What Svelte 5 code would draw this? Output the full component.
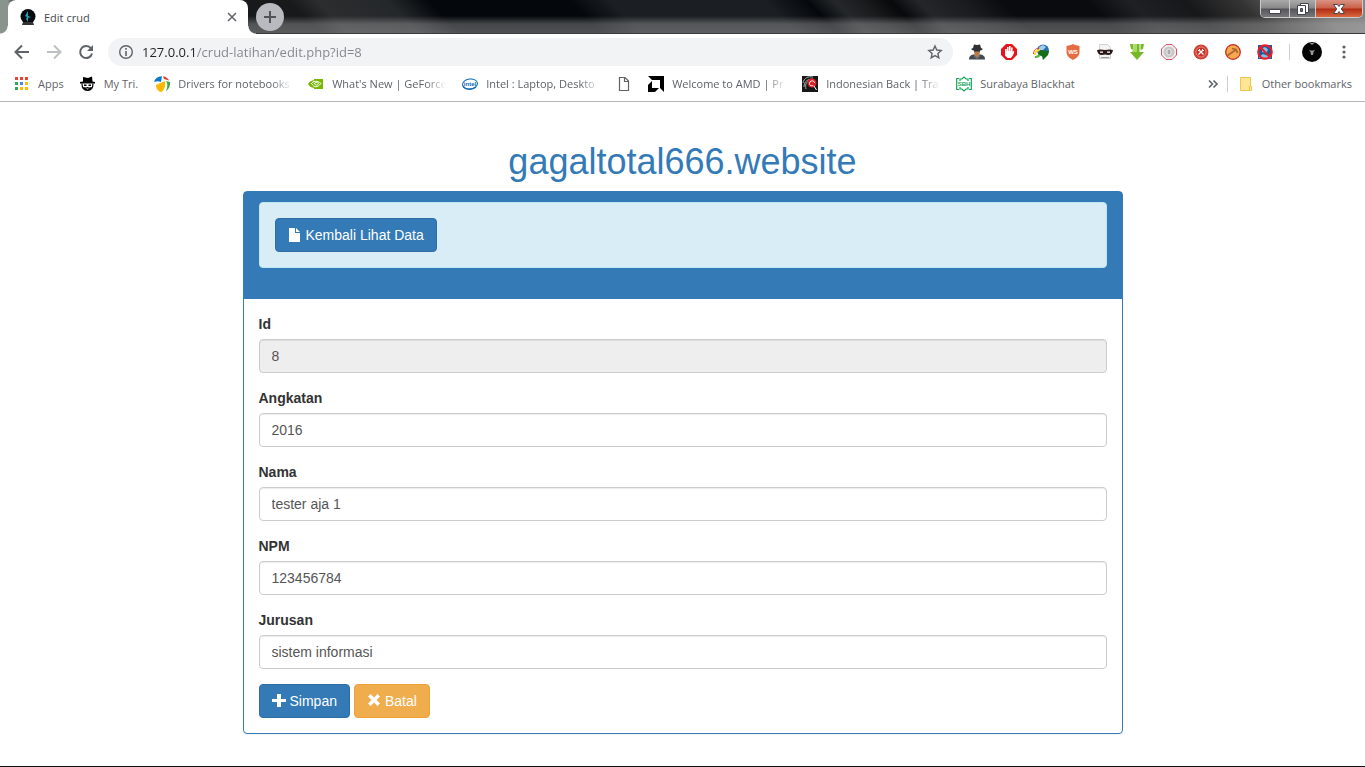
<script>
	const bookmarks = [
		{ title: 'Apps', icon: apps },
		{ title: 'My Tri.', icon: hat },
		{ title: 'Drivers for notebooks', icon: drivers, faded: true },
		{ title: "What's New | GeForce", icon: nvidia, faded: true },
		{ title: 'Intel : Laptop, Deskto', icon: intel, faded: true },
		{ title: '', icon: page },
		{ title: 'Welcome to AMD | Pr', icon: amd, faded: true },
		{ title: 'Indonesian Back | Tra', icon: backtrack, faded: true },
		{ title: 'Surabaya Blackhat', icon: blackhat }
	];

	const extensions = [
		{ name: 'Spy', icon: spy },
		{ name: 'Ad block', icon: hand },
		{ name: 'Download manager', icon: globe },
		{ name: 'WS', icon: shield },
		{ name: 'Private page', icon: mask },
		{ name: 'Downloader', icon: arrowDown },
		{ name: 'Octagon', icon: octagon },
		{ name: 'Tools', icon: tools },
		{ name: 'Hammer', icon: hammer },
		{ name: 'Blocker', icon: blocker }
	];

	let url = $state('127.0.0.1/crud-latihan/edit.php?id=8');

	let fields = $state([
		{ id: 'id', label: 'Id', value: '8', readonly: true },
		{ id: 'angkatan', label: 'Angkatan', value: '2016' },
		{ id: 'nama', label: 'Nama', value: 'tester aja 1' },
		{ id: 'npm', label: 'NPM', value: '123456784' },
		{ id: 'jurusan', label: 'Jurusan', value: 'sistem informasi' }
	]);
</script>

<!-- bookmark icons -->
{#snippet apps()}
	<svg viewBox="0 0 16 16">
		<path fill="#ea4335" d="M1 1h3v3H1zM6 1h3v3H6zM11 1h3v3h-3z" />
		<path fill="#34a853" d="M1 6h3v3H1zM1 11h3v3H1z" />
		<path fill="#4285f4" d="M6 6h3v3H6z" />
		<path fill="#fbbc05" d="M11 6h3v3h-3zM6 11h3v3H6zM11 11h3v3h-3z" />
	</svg>
{/snippet}
{#snippet hat()}
	<svg viewBox="0 0 16 16">
		<path d="M3 1l5 1 4-1.500.5 5L15 6v1.500H0V6l3-.5z" />
		<path fill="none" stroke="#000" stroke-width="1.200" d="M2 7.500C2 12 4 14.500 7.500 14.500S13 12 13 7.500" />
		<path d="M4 8.500h2.500V10H4zM8.500 8.500H11V10H8.500zM3 11l3 .5 1.500-.5 1.500.5 3-.5c-.5 2.500-2 3.500-4.500 3.500S3.500 13.500 3 11z" />
		<path fill="#fff" d="M6 12.500h3l-1.500 1z" />
	</svg>
{/snippet}
{#snippet drivers()}
	<svg viewBox="0 0 16 16">
		<path fill="#0878c9" d="M0 6C1 2.500 4 .5 8 .3L7 6c-2-1-4-1-7 0z" />
		<path fill="#e23b35" d="M9 .2c3 .3 5 2 6 4.300L10 3z" />
		<path fill="#38a94e" d="M12 5l4 1c.4 4-1 7-4 9 1.500-4 2-7 0-10z" />
		<path fill="#fbb900" d="M2 9l9-4c1 5-1 10-4 11C4 15.500 2 13 2 9z" />
	</svg>
{/snippet}
{#snippet nvidia()}
	<svg viewBox="0 0 16 16">
		<path fill="#76b900" d="M6 3h9v10H6zM0 8c2-3 4-4 7-4v8C4 12 2 11 0 8z" />
		<path fill="none" stroke="#fff" d="M3 8c2-3 6-4 10-.5C9 12 6 11.500 4 8M6 8c1-2 3-2 4.500-.5C9 10 7 9.500 7 8M6 5v1" />
	</svg>
{/snippet}
{#snippet intel()}
	<svg viewBox="0 0 16 16">
		<ellipse cx="8" cy="8" rx="7.500" ry="5" fill="#fff" stroke="#0f6ab4" transform="rotate(-7 8 8)" />
		<path fill="none" stroke="#0f6ab4" stroke-width="1.500" d="M1 10c2 4 9 4 13 1" />
		<text x="8" y="10" class="logo-text" font-size="6" fill="#0f6ab4">intel</text>
	</svg>
{/snippet}
{#snippet page()}
	<svg viewBox="0 0 16 16">
		<path fill="#fff" stroke="#5f6368" stroke-width="1.200" d="M3.500 1.500h5.500l3.500 3.500v9.500h-9zM8.500 1.500V5.500h4" />
	</svg>
{/snippet}
{#snippet amd()}
	<svg viewBox="0 0 16 16">
		<path d="M0 0h16v16l-4-4V4H4z" />
		<path d="M4 5v7h7l-4 4H0V9z" />
	</svg>
{/snippet}
{#snippet backtrack()}
	<svg viewBox="0 0 16 16">
		<path fill="#171717" d="M0 0h16v16H0z" />
		<path fill="none" stroke="#aaa" d="M1 7c1-5 5-7 10-6M2 11C2 5 6 3 11 3M4 13C3 9 4 6 7 5" />
		<circle cx="10" cy="7" r="4.500" fill="#e21c22" />
		<path fill="none" stroke="#fff" d="M12.500 7c0-3-5-3-5 .5 0 2.500 3 3 4 1.500M12 10l2.500 4" />
	</svg>
{/snippet}
{#snippet blackhat()}
	<svg viewBox="0 0 16 16" fill="none" stroke="#12a558" stroke-width="1.200">
		<path d="M3 2.500H.7v11H3M13 2.500h2.300v11H13" />
		<path d="M4 5V3h2l2-2 2 2h2v2M4 11v2h2l2 2 2-2h2v-2" />
		<text x="8" y="10" class="logo-text" font-size="6" stroke="none" fill="#12a558">SBH</text>
	</svg>
{/snippet}

<!-- extension icons -->
{#snippet spy()}
	<svg viewBox="0 0 16 16">
		<path fill="#45494e" d="M0 15.500c0-3.500 2-4.500 4-5h8c2 .5 4 1.500 4 5z" />
		<path fill="#b87a44" d="M5 5h6v3l-1 4-2 2-2-2-1-4z" />
		<path fill="#2f3134" d="M5 .5l3 .5 3-.5 1 3.500 2 1-2 1.500H4L2 5l2-1zM5 6h6v1.500H5z" />
		<path fill="#6a7078" d="M5 10.500l3 3 3-3v2l-3 3-3-3z" />
	</svg>
{/snippet}
{#snippet hand()}
	<svg viewBox="0 0 16 16">
		<path fill="#e8141c" d="M5 0h6l5 5v6l-5 5H5l-5-5V5z" />
		<path fill="#fff" d="M4 5h1.700v2H6V3h1.600v4H8V2h1.600v5h.4V3.500h1.600V8l1-1 .8.800-1.500 3.700L10 14H6.500L4 11.500z" />
	</svg>
{/snippet}
{#snippet globe()}
	<svg viewBox="0 0 16 16">
		<circle cx="10" cy="6.500" r="6" fill="#2d6fae" />
		<path fill="#9fd0ee" d="M6 3l4-2 3 2-3 3-4 1z" />
		<path fill="none" stroke="#e43b27" d="M.5 10c0-4 3-6 6-6" />
		<path fill="none" stroke="#ffda2b" stroke-width="2" d="M2 11c0-3 2-5 5-5" />
		<path fill="none" stroke="#52b837" stroke-width="2" d="M2 13c2 .5 4-1 6-3" />
		<path fill="#176e18" d="M7 6l9 1-1 4-5 5-1-4-4-2z" />
	</svg>
{/snippet}
{#snippet shield()}
	<svg viewBox="0 0 16 16">
		<path fill="#e66d42" d="M8 0c2 1 4 1.500 6.500 2v6c0 4-3 6-6.500 8-3.500-2-6.500-4-6.500-8V2C4 1.500 6 1 8 0z" />
		<text x="8" y="10" class="logo-text" font-size="6" fill="#fff">WS</text>
	</svg>
{/snippet}
{#snippet mask()}
	<svg viewBox="0 0 16 16">
		<path fill="#f4f4f4" stroke="#d0d0d0" d="M2.500.5h8l3 3v11h-11z" />
		<path fill="#2a171a" d="M0 6c3-1 5-.5 8 0 3-.5 5-1 8 0-.5 4-3 6-8 4.500C3 12 .5 10 0 6z" />
		<path fill="#fff" d="M3 7.500h3v1.200H3zM10 7.500h3v1.200h-3z" />
		<path fill="#999" d="M4 13h8v1H4z" />
	</svg>
{/snippet}
{#snippet arrowDown()}
	<svg viewBox="0 0 16 16">
		<path fill="#77b82a" d="M5.500 0h5v8H15l-7 8-7-8h4.500zM1 0h3.500v6L2 5zM11.500 0H15l-1 5-2.500 1z" />
		<path fill="#a8db5d" d="M6 0h2v8H3z" />
	</svg>
{/snippet}
{#snippet octagon()}
	<svg viewBox="0 0 16 16">
		<path fill="#eee" stroke="#e14d68" d="M5 .5h6L15.500 5v6L11 15.500H5L.5 11V5z" />
		<circle cx="8" cy="8" r="5.500" fill="#c7c7c7" />
		<rect x="6" y="5" width="4" height="6" rx="2" fill="#aaa" stroke="#eee" />
	</svg>
{/snippet}
{#snippet tools()}
	<svg viewBox="0 0 16 16">
		<circle cx="8" cy="8" r="7.500" fill="#cf4437" />
		<circle cx="8" cy="8" r="5" fill="#c63429" stroke="#e99b93" stroke-width=".8" />
		<path stroke="#fff" stroke-width="1.200" d="M6 6l4.500 4.500M10 6l-4.500 4.500" />
		<path stroke="#fff" d="M5 7l2-2M9 5l2 2" />
	</svg>
{/snippet}
{#snippet hammer()}
	<svg viewBox="0 0 16 16">
		<circle cx="8" cy="8" r="7.300" fill="#f9a852" stroke="#c8301c" stroke-width="1.300" />
		<path fill="none" stroke="#a8682f" stroke-width="1.800" d="M2.500 11.500l8-5.500M7 4.500l4 1 1.500 3.500" />
	</svg>
{/snippet}
{#snippet blocker()}
	<svg viewBox="0 0 16 16">
		<path fill="#1c5c98" d="M1 1h14v14H1z" />
		<path fill="#7fc0e8" d="M5 5c2-3 5-2 6 1l-2 3-4-1zM2 13l4-3 8 3v1H2z" />
		<circle cx="8" cy="8" r="6.800" fill="none" stroke="#ed1c24" stroke-width="2" />
		<path stroke="#ed1c24" stroke-width="2" d="M3 3l10 10" />
	</svg>
{/snippet}

<div class="window">
	<header>
		<div class="tabstrip">
			<div class="tab">
				<svg class="favicon" viewBox="0 0 16 16">
					<circle cx="8" cy="7.500" r="7.500" fill="#080c10" />
					<path fill="#333" d="M3 13h10l1 3H2z" />
					<path fill="#1fa3b5" d="M8 2L5 7l2 1-1 2 2 3V9l3-1-3-1z" />
				</svg>
				<span>Edit crud</span>
				<button class="close-tab" aria-label="Close tab">
					<svg viewBox="0 0 16 16"><path stroke="#5f6368" stroke-width="1.500" d="M4 4l8 8M12 4l-8 8" /></svg>
				</button>
			</div>
			<button class="new-tab" aria-label="New tab">
				<svg viewBox="0 0 16 16"><path stroke="#505358" stroke-width="2" d="M8 2v12M2 8h12" /></svg>
			</button>
			<div class="window-controls">
				<button aria-label="Minimize">
					<svg viewBox="0 0 16 16"><path fill="#fff" stroke="#45454f" d="M2.500 8.500h11v4h-11z" /></svg>
				</button>
				<button class="restore" aria-label="Restore">
					<svg viewBox="0 0 16 16">
						<path fill="#fff" stroke="#45454f" d="M5.500 2.500h8v9h-8z" />
						<path fill="#fff" stroke="#45454f" d="M2.500 4.500h8v9h-8z" />
						<path fill="#777" stroke="#45454f" d="M5.500 7.500h2v3h-2z" />
					</svg>
				</button>
				<button class="close" aria-label="Close">
					<svg viewBox="0 0 16 16">
						<path fill="#fff" stroke="#45454f" d="M2.500 3.500h4L8 5.500l1.500-2h4L10.300 8l3.200 4.500h-4L8 10.500l-1.500 2h-4L5.700 8z" />
					</svg>
				</button>
			</div>
		</div>

		<div class="toolbar">
			<button class="icon" aria-label="Back">
				<svg viewBox="0 0 16 16"><path fill="none" stroke="#5f6368" stroke-width="2" d="M15 8H2M8 1.500L1.500 8 8 14.500" /></svg>
			</button>
			<button class="icon" aria-label="Forward" disabled>
				<svg viewBox="0 0 16 16"><path fill="none" stroke="#bdc1c6" stroke-width="2" d="M1 8h13M8 1.500L14.500 8 8 14.500" /></svg>
			</button>
			<button class="icon" aria-label="Reload">
				<svg viewBox="0 0 16 16">
					<path fill="none" stroke="#5f6368" stroke-width="2" d="M13 4.500A6 6 0 1 0 14 9.500" />
					<path fill="#5f6368" d="M15 1v6H9z" />
				</svg>
			</button>
			<div class="omnibox">
				<svg viewBox="0 0 16 16">
					<circle cx="8" cy="8" r="6.300" fill="none" stroke="#5f6368" stroke-width="1.400" />
					<path fill="#5f6368" d="M7.200 4h1.600v1.700H7.200zM7.200 7h1.600v5H7.200z" />
				</svg>
				<input class="url" aria-label="Address" bind:value={url} />
				<button class="icon" aria-label="Bookmark this page">
					<svg viewBox="0 0 16 16">
						<path fill="none" stroke="#5f6368" stroke-width="1.400" d="M8 2l1.800 4 4.400.5-3.300 3 .9 4.300L8 11.600l-3.800 2.200.9-4.300-3.300-3L6.200 6z" />
					</svg>
				</button>
			</div>
			<div class="extensions">
				{#each extensions as ext}
					<button class="icon" aria-label={ext.name}>{@render ext.icon()}</button>
				{/each}
			</div>
			<button class="avatar" aria-label="Profile">
				<svg viewBox="0 0 20 20">
					<circle cx="10" cy="10" r="10" fill="#050505" />
					<path fill="#999" d="M7 8l2 .5h2l2-.5-1.500 2-.5 3H9l-.5-3zM8 1h4l-1 1.500H9z" />
				</svg>
			</button>
			<button class="icon" aria-label="Menu">
				<svg viewBox="0 0 16 16" fill="#5f6368">
					<circle cx="8" cy="3" r="1.600" /><circle cx="8" cy="8" r="1.600" /><circle cx="8" cy="13" r="1.600" />
				</svg>
			</button>
		</div>

		<nav class="bookmarks">
			{#each bookmarks as bookmark}
				<a href="#bookmark" aria-label={bookmark.title || 'Page'}>
					{@render bookmark.icon()}
					{#if bookmark.title}
						<span class:faded={bookmark.faded}>{bookmark.title}</span>
					{/if}
				</a>
			{/each}
			<button class="more" aria-label="More bookmarks">
				<svg viewBox="0 0 16 16"><path fill="none" stroke="#5f6368" stroke-width="1.600" d="M4 4.500L7.500 8 4 11.500M8.500 4.500L12 8l-3.500 3.500" /></svg>
			</button>
			<a class="other" href="#other">
				<svg viewBox="0 0 16 16">
					<path fill="#ffe694" stroke="#ebc74f" d="M2.500 1.500h10v9h1v4h-11z" />
					<path fill="none" stroke="#ebc74f" d="M11.500 14v-3.500h1" />
				</svg>
				Other bookmarks
			</a>
		</nav>
	</header>

	<main>
		<h1>gagaltotal666.website</h1>
		<section class="panel">
			<div class="panel-heading">
				<div class="alert">
					<a class="btn primary" href="#data">
						<svg viewBox="0 0 14 14"><path fill="#fff" d="M1 0h6v5h5v9H1zM8 0l4 4H8z" /></svg>
						Kembali Lihat Data
					</a>
				</div>
			</div>
			<form class="panel-body">
				{#each fields as field}
					<div class="form-group">
						<label for={field.id}>{field.label}</label>
						<input id={field.id} type="text" bind:value={field.value} readonly={field.readonly} />
					</div>
				{/each}
				<div class="actions">
					<button type="button" class="btn primary">
						<svg viewBox="0 0 14 14"><path fill="#fff" d="M5 0h4v5h5v3H9v5H5V8H0V5h5z" /></svg>
						Simpan
					</button>
					<button type="reset" class="btn warning">
						<svg viewBox="0 0 14 14"><path fill="#fff" d="M3.500 0L7 3.500 10.500 0 13 2.500 9.500 6 13 9.500 10.500 12 7 8.500 3.500 12 1 9.500 4.500 6 1 2.500z" /></svg>
						Batal
					</button>
				</div>
			</form>
		</section>
	</main>
</div>

<style>
	:global(body) {
		margin: 0;
		background: #fff;
	}

	.window {
		box-sizing: border-box;
		min-height: 100vh;
		border-bottom: 1px solid #111;
		font-family: "Open Sans", "Noto Sans", sans-serif;
		font-size: 11px;
		color: #5f6368;
	}

	header button {
		padding: 0;
		border: none;
		background: none;
	}

	svg {
		display: block;
		flex: none;
		width: 16px;
		height: 16px;
	}

	.logo-text {
		font-family: "Liberation Sans", Arial, sans-serif;
		font-weight: bold;
		text-anchor: middle;
	}

	/*------ TAB STRIP ---*/
	.tabstrip {
		display: flex;
		height: 34px;
		padding-left: 8px;
		background:
			linear-gradient(to right, #8a948e 0, #8a948e 8px, transparent 16px),
			linear-gradient(to bottom, transparent 16px, rgba(190, 190, 190, 0.35) 24px, rgba(190, 190, 190, 0.4) 33px, #3b3b3b 33px),
			linear-gradient(45deg, #1a1c1e 0%, #17191b 23%, #2b2d2e 25%, #25282b 30%, #04080c 33%, #04080c 43%, #1b1f23 46%,
				#1b1f23 57%, #05080c 60%, #24272a 62%, #1a1b1d 64%, #08090b 66%, #242629 68%, #1b1c1f 71%, #0a0b0e 74%, #0a0b0e 80%,
				#1f2023 83%, #17181a 87%, #343434 91%, #777 96%, #888 100%);
	}

	.tab {
		position: relative;
		display: flex;
		align-items: center;
		gap: 8px;
		box-sizing: border-box;
		width: 240px;
		padding: 0 8px 0 12px;
		border-radius: 8px 8px 0 0;
		background: #fff;
		color: #45494d;
	}

	/* outward curves at the foot of the tab */
	.tab::before,
	.tab::after {
		content: "";
		position: absolute;
		bottom: 0;
		width: 8px;
		height: 8px;
	}

	.tab::before {
		right: 100%;
		background: radial-gradient(circle at 0 0, transparent 7px, #fff 8px);
	}

	.tab::after {
		left: 100%;
		background: radial-gradient(circle at 100% 0, transparent 7px, #fff 8px);
	}

	.close-tab {
		margin-left: auto;
	}

	.new-tab {
		display: flex;
		align-items: center;
		justify-content: center;
		align-self: center;
		width: 28px;
		height: 28px;
		margin-left: 8px;
	}

	header .new-tab {
		border-radius: 50%;
		background: #b9babf;
	}

	.window-controls {
		display: flex;
		align-self: flex-start;
		margin: 0 2px 0 auto;
		border: 1px solid #ccc;
		border-top: none;
		border-radius: 0 0 5px 5px;
		overflow: hidden;
	}

	.window-controls button {
		display: flex;
		align-items: center;
		justify-content: center;
		width: 29px;
		height: 17px;
		border-right: 1px solid #ccc;
		background: linear-gradient(#aaa 0, #888 8px, #55555a 9px, #77777c 17px);
	}

	.window-controls .restore {
		width: 26px;
	}

	.window-controls .close {
		width: 46px;
		border-right: none;
		background: linear-gradient(#d99384 0, #cb604a 8px, #b12b12 9px, #d9683f 17px);
	}

	/*------ TOOLBAR ---*/
	.toolbar {
		display: flex;
		align-items: center;
		gap: 16px;
		height: 36px;
		padding: 0 13px 0 14px;
	}

	.omnibox {
		display: flex;
		flex: 1;
		align-items: center;
		gap: 8px;
		height: 28px;
		margin-left: -2px;
		padding: 0 10px;
		border-radius: 14px;
		background: #f1f3f4;
	}

	/* host name dark, path grey */
	.url {
		flex: 1;
		min-width: 0;
		padding: 0;
		border: none;
		outline: none;
		background: linear-gradient(to right, #202124 55px, #80868b 55px);
		background-clip: text;
		-webkit-text-fill-color: transparent;
		font: 13px/20px "Open Sans", "Noto Sans", sans-serif;
	}

	.extensions {
		display: flex;
		gap: 16px;
		padding-right: 16px;
		border-right: 1px solid #ccced1;
	}

	.avatar {
		margin: 0 -2px 0 -4px;
	}

	.avatar svg {
		width: 20px;
		height: 20px;
	}

	/*------ BOOKMARKS ---*/
	.bookmarks {
		display: flex;
		align-items: center;
		gap: 16px;
		height: 28px;
		padding: 0 13px 3px 14px;
		border-bottom: 1px solid #b4b6b8;
		line-height: 16px;
		white-space: nowrap;
	}

	.bookmarks a {
		display: flex;
		align-items: center;
		gap: 8px;
		color: #5f6368;
		text-decoration: none;
	}

	.bookmarks .faded {
		width: 114px;
		mask-image: linear-gradient(to right, #000 94px, transparent 114px);
	}

	.bookmarks .more {
		margin-left: auto;
	}

	.bookmarks .other {
		margin-left: -10px;
		padding-left: 10px;
		border-left: 1px solid #ccced1;
	}

	/*------ PAGE ---*/
	main {
		max-width: 880px;
		margin: 0 auto;
		padding: 40px 0 32px;
		font-family: "Liberation Sans", Arial, sans-serif;
		font-size: 14px;
		line-height: 20px;
		color: #333;
	}

	h1 {
		margin: 0 0 9px;
		color: #337ab7;
		font-size: 36px;
		font-weight: 500;
		line-height: 40px;
		text-align: center;
	}

	.panel {
		border: 1px solid #337ab7;
		border-radius: 4px;
		box-shadow: 0 1px 1px rgba(0, 0, 0, 0.05);
	}

	.panel-heading {
		padding: 10px 15px 31px;
		background: #337ab7;
	}

	.alert {
		padding: 15px;
		border: 1px solid #bce8f1;
		border-radius: 4px;
		background: #d9edf7;
	}

	.panel-body {
		padding: 15px;
	}

	.form-group {
		margin-bottom: 15px;
	}

	label {
		display: block;
		margin-bottom: 5px;
		font-weight: bold;
	}

	.form-group input {
		display: block;
		box-sizing: border-box;
		width: 100%;
		height: 34px;
		padding: 6px 12px;
		border: 1px solid #ccc;
		border-radius: 4px;
		background: #fff;
		box-shadow: inset 0 1px 1px rgba(0, 0, 0, 0.075);
		color: #555;
		font: inherit;
	}

	.form-group input:read-only {
		background: #eee;
	}

	.actions {
		display: flex;
		gap: 4px;
	}

	.btn {
		display: inline-flex;
		align-items: center;
		gap: 4px;
		padding: 6px 12px;
		border: 1px solid;
		border-radius: 4px;
		color: #fff;
		font: inherit;
		text-decoration: none;
		vertical-align: top;
	}

	.btn svg {
		width: 14px;
		height: 14px;
	}

	.primary {
		border-color: #2e6da4;
		background: #337ab7;
	}

	.warning {
		border-color: #eea236;
		background: #f0ad4e;
	}
</style>
